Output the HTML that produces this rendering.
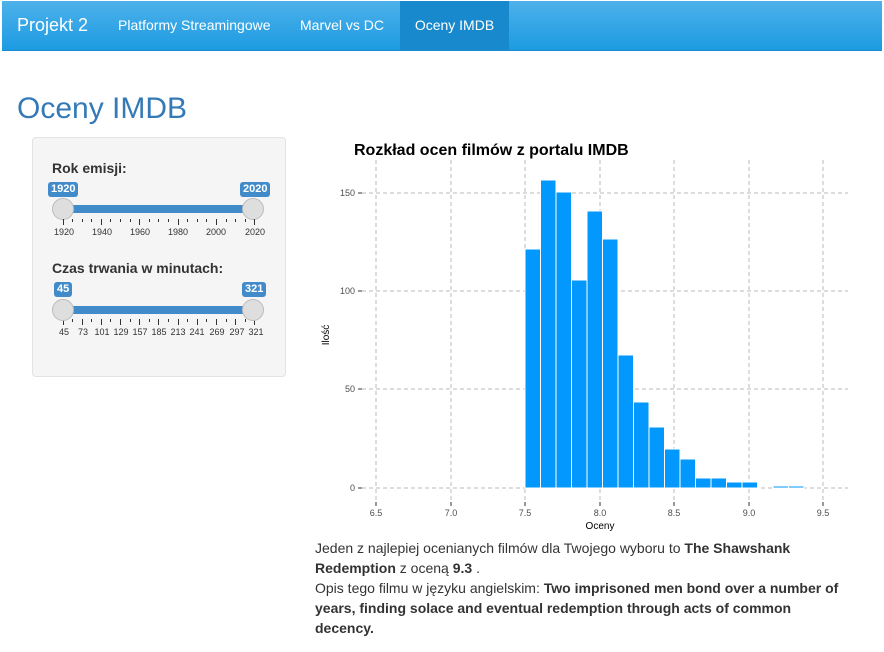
<!DOCTYPE html>
<html><head><meta charset="utf-8"><style>
body{margin:0;width:884px;height:652px;background:#fff;font-family:"Liberation Sans",sans-serif;position:relative;overflow:hidden;color:#333}
.nav{position:absolute;left:2px;top:1px;width:880px;height:49px;background:linear-gradient(#4eb1ea,#1d9be2);border-bottom:1px solid #1a8bd0}
.nav span{position:absolute;top:0;line-height:49px;color:#fff;font-size:14px}
.act{background:#1789cc;}
.abs{position:absolute}
.panel{position:absolute;left:32px;top:137px;width:252px;height:238px;background:#f5f5f5;border:1px solid #e3e3e3;border-radius:4px}
.lbl{position:absolute;font-weight:bold;font-size:14px;color:#333}
.badge{position:absolute;background:#428bca;color:#fff;font-size:11px;font-weight:bold;padding:1px 3px;border-radius:3px;line-height:13px}
.bar{position:absolute;height:8px;background:#428bca}
.knob{position:absolute;width:20px;height:20px;border-radius:50%;background:#dedede;border:1px solid #bbb}
p{margin:0}
</style></head><body>
<div class="nav">
<span style="left:15px;font-size:18px">Projekt 2</span>
<span style="left:116px">Platformy Streamingowe</span>
<span style="left:298px">Marvel vs DC</span>
<span class="act" style="left:398px;width:109px;text-align:center">Oceny IMDB</span>
</div>
<div class="abs" style="left:17px;top:92px;font-size:30px;color:#337ab7">Oceny IMDB</div>
<div class="panel"></div>
<div class="lbl" style="left:52px;top:160px">Rok emisji:</div>
<div class="badge" style="left:48px;top:182px">1920</div>
<div class="badge" style="left:240px;top:182px">2020</div>
<div class="bar" style="left:63px;top:205px;width:190px"></div>
<div class="knob" style="left:52px;top:198px"></div>
<div class="knob" style="left:242px;top:198px"></div>
<svg class="abs" style="left:0;top:0" width="300" height="360">
<g stroke="#333" stroke-width="1">
<path d="M63.5 219v6M82.5 219v3M101.5 219v6M120.5 219v3M139.5 219v6M158.5 219v3M178.5 219v6M197.5 219v3M216.5 219v6M235.5 219v3M254.5 219v6M72.5 219v3M91.5 219v3M110.5 219v3M130.5 219v3M149.5 219v3M168.5 219v3M187.5 219v3M206.5 219v3M226.5 219v3M245.5 219v3"/>
<path d="M63.5 319v6M82.5 319v6M101.5 319v6M120.5 319v6M139.5 319v6M158.5 319v6M178.5 319v6M197.5 319v6M216.5 319v6M235.5 319v6M254.5 319v6M72.5 319v3M91.5 319v3M110.5 319v3M130.5 319v3M149.5 319v3M168.5 319v3M187.5 319v3M206.5 319v3M226.5 319v3M245.5 319v3"/>
</g>
<g font-size="9" fill="#333" text-anchor="middle" font-family="Liberation Sans">
<text x="64" y="235">1920</text><text x="102" y="235">1940</text><text x="140" y="235">1960</text><text x="178" y="235">1980</text><text x="216" y="235">2000</text><text x="255" y="235">2020</text>
<text x="64" y="335">45</text><text x="83" y="335">73</text><text x="102" y="335">101</text><text x="121" y="335">129</text><text x="140" y="335">157</text><text x="159" y="335">185</text><text x="178" y="335">213</text><text x="197" y="335">241</text><text x="217" y="335">269</text><text x="237" y="335">297</text><text x="256" y="335">321</text>
</g></svg>
<div class="lbl" style="left:52px;top:260px">Czas trwania w minutach:</div>
<div class="badge" style="left:54px;top:282px">45</div>
<div class="badge" style="left:242px;top:282px">321</div>
<div class="bar" style="left:63px;top:306px;width:190px"></div>
<div class="knob" style="left:52px;top:299px"></div>
<div class="knob" style="left:242px;top:299px"></div>

<svg class="abs" style="left:310px;top:135px" width="560" height="400" font-family="Liberation Sans">
<text x="44" y="20" font-size="16" font-weight="bold" fill="#000">Rozkład ocen filmów z portalu IMDB</text>
<g stroke="#bbb" stroke-dasharray="4,3" stroke-width="1">
<path d="M52 353h486M52 254h486M52 156h486M52 58h486"/>
<path d="M66 25v342M141 25v342M215 25v342M290 25v342M364 25v342M439 25v342M513 25v342"/>
</g>
<g fill="#0398fd" stroke="#fff" stroke-width="1">
<rect x="215" y="114" width="15.5" height="239"/><rect x="230.5" y="45" width="15.5" height="308"/><rect x="246" y="57" width="15.5" height="296"/><rect x="261.5" y="145" width="15.5" height="208"/><rect x="277" y="76" width="15.5" height="277"/><rect x="292.5" y="104" width="15.5" height="249"/><rect x="308" y="220" width="15.5" height="133"/><rect x="323.5" y="267" width="15.5" height="86"/><rect x="339" y="292" width="15.5" height="61"/><rect x="354.5" y="314" width="15.5" height="39"/><rect x="370" y="324" width="15.5" height="29"/><rect x="385.5" y="343" width="15.5" height="10"/><rect x="401" y="343" width="15.5" height="10"/><rect x="416.5" y="347" width="15.5" height="6"/><rect x="432" y="347" width="15.5" height="6"/><rect x="463" y="351" width="15.5" height="2"/><rect x="478.5" y="351" width="15.5" height="2"/>
</g>
<g stroke="#333"><path d="M48 353h4M48 254h4M48 156h4M48 58h4M66 367v4M141 367v4M215 367v4M290 367v4M364 367v4M439 367v4M513 367v4"/></g>
<g font-size="9" fill="#4d4d4d" text-anchor="end"><text x="45" y="356">0</text><text x="45" y="257">50</text><text x="45" y="159">100</text><text x="45" y="61">150</text></g>
<g font-size="9" fill="#4d4d4d" text-anchor="middle"><text x="66" y="381">6.5</text><text x="141" y="381">7.0</text><text x="215" y="381">7.5</text><text x="290" y="381">8.0</text><text x="364" y="381">8.5</text><text x="439" y="381">9.0</text><text x="513" y="381">9.5</text></g>
<text x="290" y="394" font-size="10" text-anchor="middle">Oceny</text>
<text transform="translate(19,200) rotate(-90)" font-size="10" text-anchor="middle">Ilość</text>
</svg>
<div class="abs" style="left:315px;top:538px;width:528px;font-size:14px;line-height:20px;color:#333">
<p>Jeden z najlepiej ocenianych filmów dla Twojego wyboru to <b>The Shawshank Redemption</b> z oceną <b>9.3</b> .</p>
<p>Opis tego filmu w języku angielskim: <b>Two imprisoned men bond over a number of years, finding solace and eventual redemption through acts of common decency.</b></p>
</div>
</body></html>
